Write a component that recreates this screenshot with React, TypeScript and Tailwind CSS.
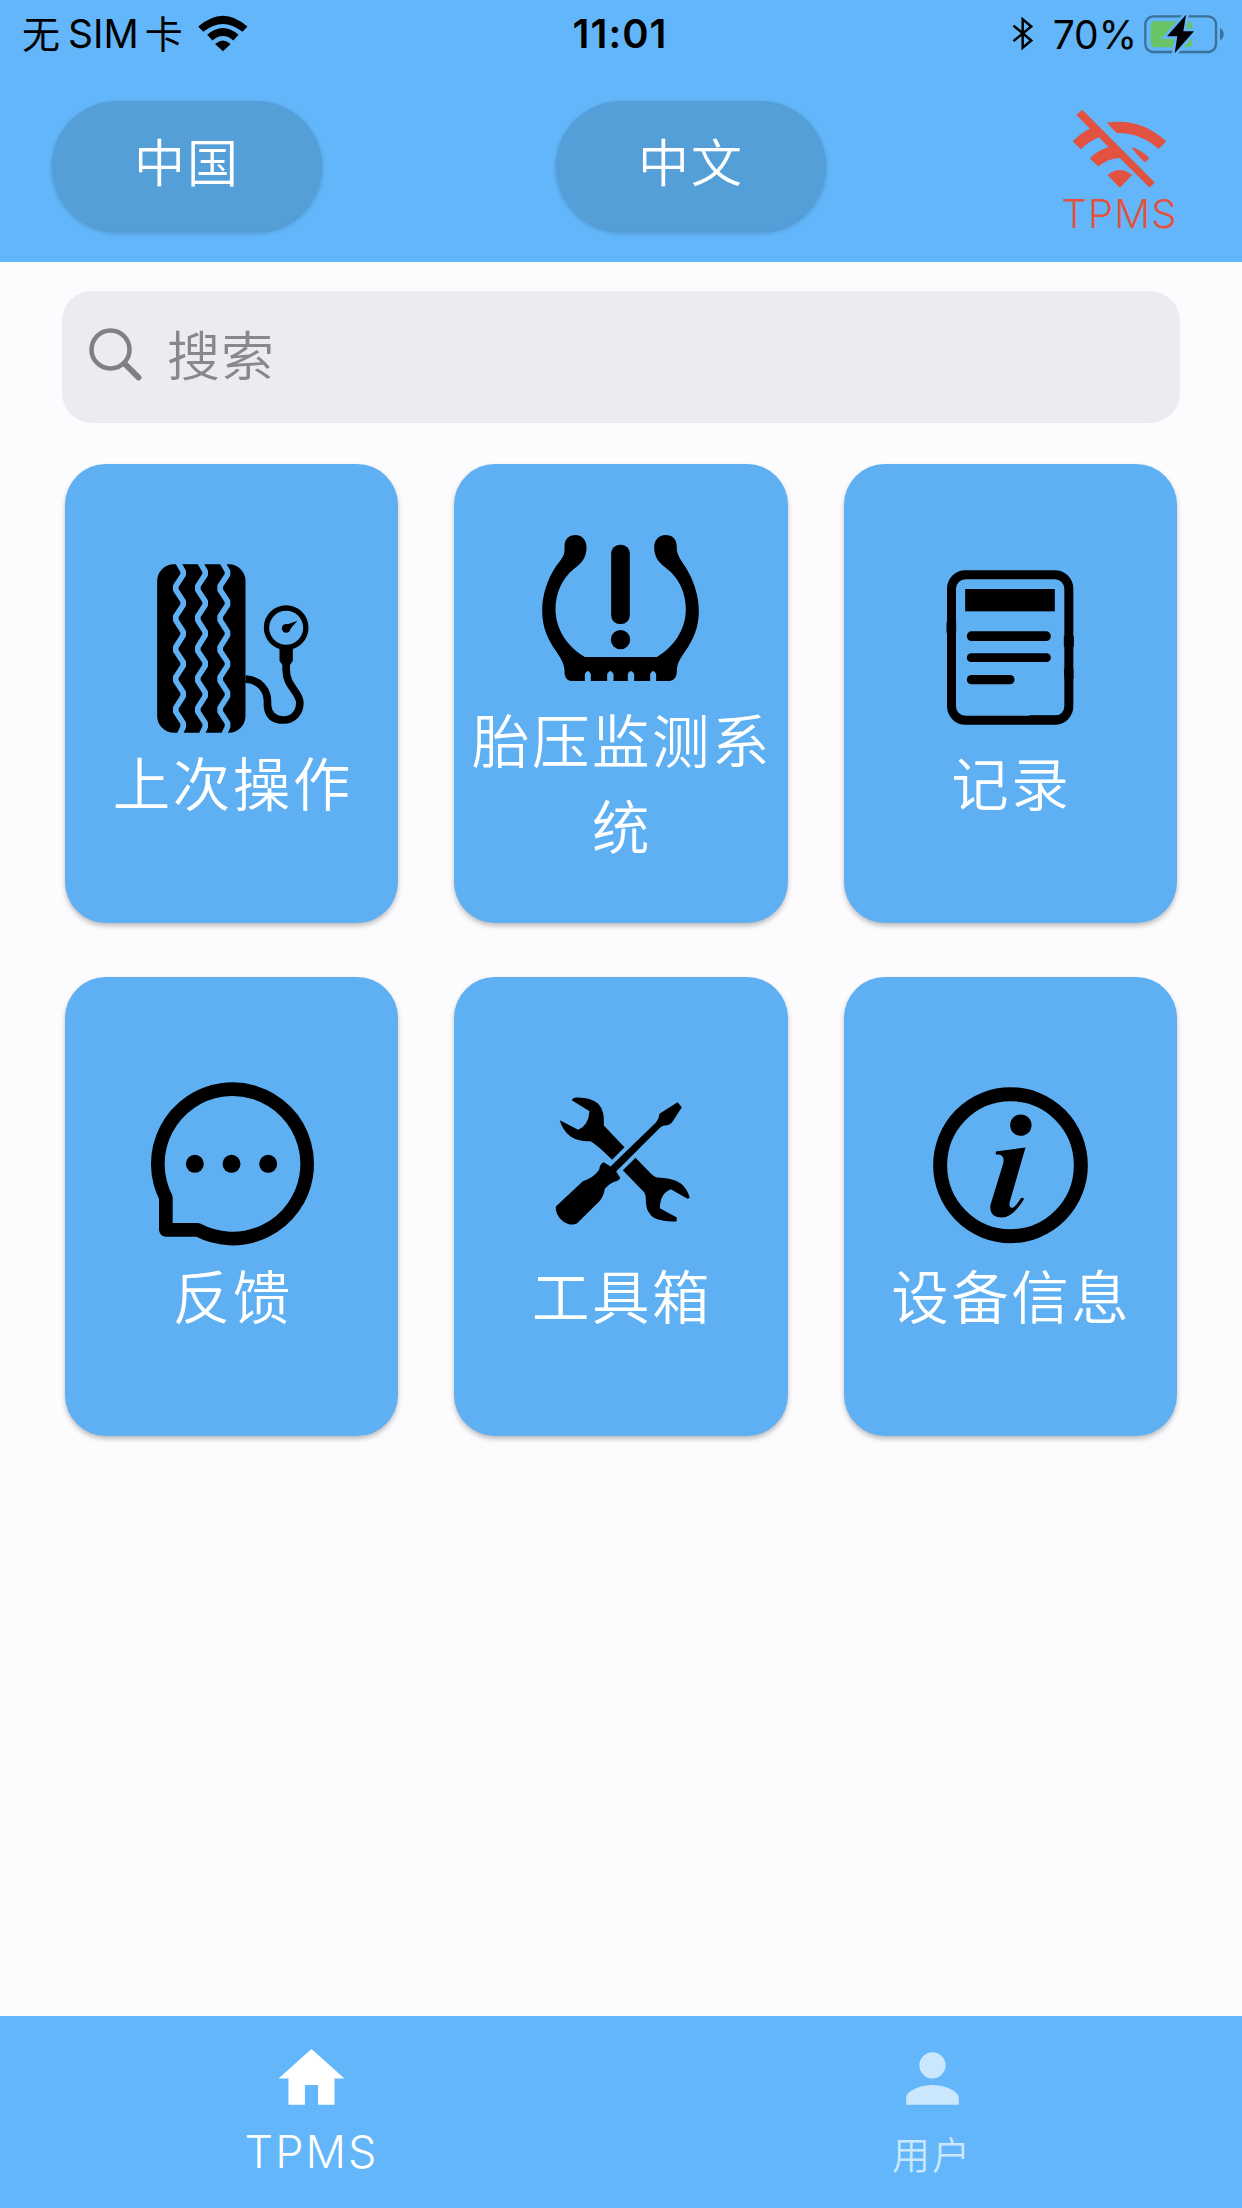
import type { ReactNode } from "react";
import { MdHome, MdPerson } from "react-icons/md";

type Tile = {
  label: string;
  icon: ReactNode;
};

function WifiIcon() {
  return (
    <svg viewBox="594 44 150 112" className="h-[37px] w-[50px]">
      <path d="M594 79Q669 13 743 79L728 95Q669 47 609 95Z" />
      <path d="M621 104Q669 63 716 104L700 121Q669 94 637 121Z" />
      <path d="M645 132Q669 110 692 132L669 154Z" />
    </svg>
  );
}

function BluetoothIcon() {
  return (
    <svg viewBox="96 54 66 100" className="h-[33px] w-[22px]">
      <path
        d="M100 80L154 125L128 147V61L154 83L100 127"
        fill="none"
        stroke="#000"
        strokeWidth="7.500"
      />
    </svg>
  );
}

function BatteryIcon() {
  return (
    <svg viewBox="492 36 240 120" className="h-[40px] w-[80px]">
      <rect x="496" y="43" width="212" height="107" rx="24" fill="none" stroke="#3c7099" strokeWidth="7" />
      <path d="M720 78Q731 84 731 97T720 115Z" fill="#3c7099" />
      <path d="M526 58H622Q636 58 636 72V122Q636 136 622 136H526Q512 136 512 122V72Q512 58 526 58Z" fill="#68c466" />
      <path
        d="M618 38L561 103H592L584 154L642 88H610Z"
        stroke="#62b6f9"
        strokeWidth="16"
        paintOrder="stroke"
      />
    </svg>
  );
}

function WifiOffIcon() {
  return (
    <svg viewBox="276 326 286 240" className="h-[80px] w-[95px]" fill="#e25240">
      <path d="M381 367Q480 350 560 423L537 446Q480 396 410 398Z" />
      <path d="M454 440Q485 449 509 473L497 486Q485 481 454 440Z" />
      <path d="M278 423Q302 398 330 385L289 344L307 328L525 547L510 563L420 473Q385 474 355 499L330 474Q352 451 386 440L357 411Q328 422 303 447Z" />
      <path d="M383 524Q420 494 457 524L420 563Z" />
    </svg>
  );
}

function SearchIcon() {
  return (
    <svg viewBox="0 0 54 54" className="mb-[6px] h-[54px] w-[54px]" fill="none" stroke="#808084">
      <circle cx="22.500" cy="22.500" r="19" strokeWidth="4.500" />
      <path d="M36.500 36.500L50.500 50.500" strokeWidth="6" strokeLinecap="round" />
    </svg>
  );
}

// one groove of the tyre tread
function Groove({ x }: { x: number }) {
  return (
    <path
      d={`M${x - 5} 308L${x + 10} 334V344L${x - 12} 378V390L${x + 10} 424V435L${x - 12} 469V481L${x + 10} 515V526L${x - 12} 561V573L${x + 10} 606V617L${x - 12} 651V663L${x + 10} 697V709L${x - 12} 743V755L${x + 10} 789V801L${x - 1} 824`}
      fill="none"
      stroke="#5fb0f3"
      strokeWidth="17"
      strokeLinejoin="round"
    />
  );
}

const tireGauge = (
  <svg viewBox="244.500 300 543 543" className="h-[181px] w-[181px]">
    <rect x="293" y="313" width="265" height="505" rx="50" />
    <Groove x={361} />
    <Groove x={427} />
    <Groove x={494} />
    <circle cx="680" cy="503" r="59" fill="none" stroke="#000" strokeWidth="16" />
    <circle cx="680" cy="505" r="13" />
    <path d="M676 496L714 482L686 514Z" />
    <path d="M660 562H700V602L691 616H669L660 602Z" />
    <path
      d="M558 657C600 659 624 690 624 725V738C627 768 645 780 672 780C702 780 721 757 721 728C721 695 680 680 680 630V606"
      fill="none"
      stroke="#000"
      strokeWidth="23"
    />
  </svg>
);

const tirePressure = (
  <svg viewBox="241.500 171 543 543" className="h-[181px] w-[181px]">
    <path d="M345 258C345 236 360 225 378 225C398 225 411 240 411 262C411 294 395 312 374 326C337 355 318 400 318 448C318 510 356 562 406 591H622C672 562 709 510 709 448C709 400 690 355 652 326C630 310 614 294 614 262C614 240 628 225 648 225C668 225 682 236 682 262V272C687 292 697 303 708 321C732 360 748 405 748 453C748 505 730 541 707 574C692 597 684 608 682 630C683 650 674 662 659 663H620V642Q611 624 602 642V663H554V642Q544 624 535 642V663H492V642Q483 624 473 642V663H424V642Q415 624 406 642V663H366C351 662 344 650 345 630C343 608 334 597 320 574C297 541 278 505 278 453C278 405 293 360 318 321C334 298 344 290 345 272Z" />
    <rect x="485" y="254" width="56" height="238" rx="26" />
    <circle cx="513" cy="539" r="29" />
  </svg>
);

const record = (
  <svg viewBox="239.500 300 543 543" className="h-[181px] w-[181px]">
    <rect x="334" y="344" width="352" height="437" rx="42" fill="none" stroke="#000" strokeWidth="27" />
    <path d="M319 487H348V518H319ZM671 528H701V560H671ZM671 626H700V656H673ZM568 766H662V770H568Z" />
    <rect x="375" y="387" width="269" height="67" />
    <rect x="380" y="514" width="252" height="29" rx="14" />
    <rect x="380" y="580" width="252" height="26" rx="13" />
    <rect x="380" y="645" width="143" height="28" rx="14" />
  </svg>
);

const feedback = (
  <svg viewBox="244.500 307.500 543 543" className="h-[181px] w-[181px]">
    <path
      d="M319 681A224 224 0 1 1 414 778H319Z"
      fill="none"
      stroke="#000"
      strokeWidth="41"
      strokeLinejoin="round"
    />
    <circle cx="406" cy="580" r="27" />
    <circle cx="516" cy="580" r="27" />
    <circle cx="626" cy="580" r="27" />
  </svg>
);

const toolbox = (
  <svg viewBox="241.500 307.500 543 543" className="h-[181px] w-[181px]">
    <path d="M367 389Q371 379 385 381Q428 382 446 400Q466 420 463 465L525 530L488 568Q440 520 423 512Q388 514 363 498Q338 478 331 449L386 478Q417 465 420 422Z" />
    <path d="M558 562L520 599L578 659Q590 668 589 686Q588 718 605 735Q622 753 681 753L682 741L631 713Q632 668 664 656L714 685L721 682Q713 653 693 638Q667 622 622 621Q615 620 604 609Z" />
    <path d="M684 395L697 410L668 455Q662 464 645 465Q637 466 630 473L500 603L512 622Q510 631 494 634Q482 638 466 655Q462 680 449 693L383 758Q365 769 340 752Q316 732 319 708L400 632Q430 624 449 598Q450 580 463 575L483 588L620 455Q629 445 630 430Z" />
  </svg>
);

const deviceInfo = (
  <svg viewBox="239.500 307.500 543 543" className="h-[181px] w-[181px]">
    <ellipse cx="511" cy="584" rx="211" ry="213" fill="none" stroke="#000" strokeWidth="42" />
    <circle cx="542" cy="464" r="32" />
    <path d="M467 543L556 531L508 697Q507 713 517 712Q527 708 542 683Q551 679 551 687Q517 742 484 741Q446 740 451 703L489 579Q496 549 467 552Z" />
  </svg>
);

const tiles: Tile[] = [
  { label: "上次操作", icon: tireGauge },
  { label: "胎压监测系统", icon: tirePressure },
  { label: "记录", icon: record },
  { label: "反馈", icon: feedback },
  { label: "工具箱", icon: toolbox },
  { label: "设备信息", icon: deviceInfo },
];

function StatusBar() {
  return (
    <div className="grid h-[67px] grid-cols-[1fr_auto_1fr] items-center pr-[18px] pl-[22px] text-[39px] leading-none text-black">
      <div className="flex items-center">
        <span className="text-[38px]">无</span>
        <span className="ml-[8px]">SIM</span>
        <span className="ml-[6px] text-[38px]">卡</span>
        <span className="ml-[15px]">
          <WifiIcon />
        </span>
      </div>
      <span className="pt-px pr-[6px] text-[40px] font-semibold tracking-[1px]">11:01</span>
      <div className="flex items-center justify-end">
        <BluetoothIcon />
        <span className="mr-[7px] ml-[19px] pt-px">70%</span>
        <BatteryIcon />
      </div>
    </div>
  );
}

function Pill({ children }: { children: ReactNode }) {
  return (
    <button className="h-[130px] w-[270px] rounded-full bg-[#559fd9] pb-[3px] text-[51px] font-[350] tracking-[2px] text-white shadow-[0_2px_4px_rgba(0,0,0,0.2)]">
      {children}
    </button>
  );
}

export default function App() {
  return (
    <div className="flex h-[2208px] w-[1242px] flex-col bg-[#fcfcff] font-[Inter,'Noto_Sans_CJK_SC',sans-serif]">
      <header className="h-[262px] bg-[#62b6f9]">
        <StatusBar />
        <div className="flex items-start justify-between pt-[34px] pr-[63px] pl-[52px]">
          <Pill>中国</Pill>
          <Pill>中文</Pill>
          <div className="flex w-[119px] flex-col items-center pt-[8px] text-[#e25240]">
            <WifiOffIcon />
            <span className="mt-[5px] text-[40px] leading-[40px] font-[350] tracking-[1px]">TPMS</span>
          </div>
        </div>
      </header>

      <main className="flex-1">
        <div className="mx-[62px] mt-[29px] flex h-[132px] items-center rounded-[30px] bg-[#ecebf0] pl-[26px]">
          <SearchIcon />
          <span className="mt-px ml-[25px] text-[53px] font-[350] tracking-[1px] text-[#88888c]">
            搜索
          </span>
        </div>
        <div className="mt-[41px] grid grid-cols-3 gap-x-[56px] gap-y-[54px] px-[65px]">
          {tiles.map((tile) => (
            <button
              key={tile.label}
              className="flex h-[459px] flex-col items-center justify-center rounded-[41px] bg-[#5fb0f3] px-[10px] shadow-[0_3px_5px_rgba(0,0,0,0.25)]"
            >
              {tile.icon}
              <span className="-mr-[2px] translate-y-px text-[57.500px] leading-[86px] font-[350] tracking-[2.500px] text-white">
                {tile.label}
              </span>
            </button>
          ))}
        </div>
      </main>

      <nav className="grid h-[192px] grid-cols-2 bg-[#62b6f9]">
        <div className="flex flex-col items-center pt-[23px] pl-[2px] text-white">
          <MdHome className="h-[79px] w-[79px]" />
          <span className="mt-[10px] text-[45px] leading-[48px] font-[350] tracking-[2px]">TPMS</span>
        </div>
        <div className="flex flex-col items-center pt-[23px] pl-px text-[#cae7fd]">
          <MdPerson className="h-[79px] w-[79px]" />
          <span className="mt-[13px] text-[38px] leading-[48px] font-[350] tracking-[2px]">用户</span>
        </div>
      </nav>
    </div>
  );
}
